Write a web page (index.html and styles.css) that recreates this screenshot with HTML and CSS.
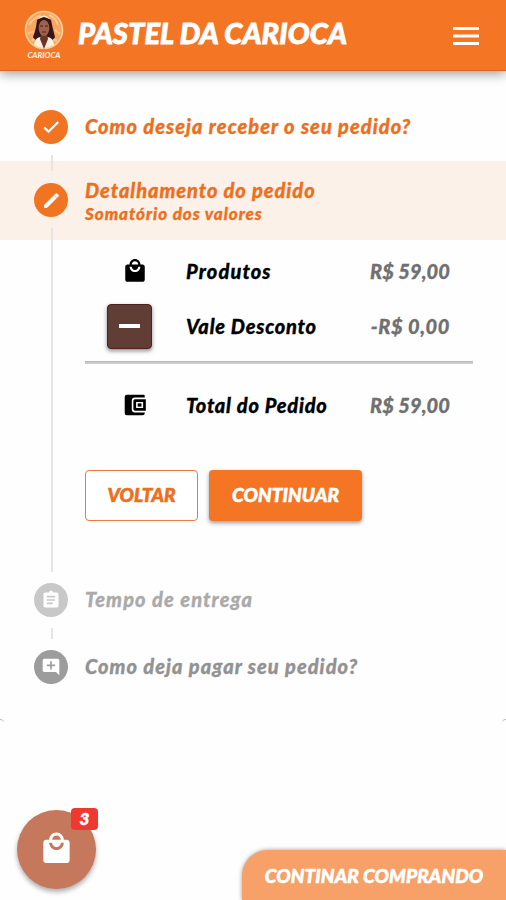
FILE: index.html
```html
<!DOCTYPE html>
<html lang="pt-BR">
<head>
<meta charset="utf-8">
<title>Pastel da Carioca</title>
<link rel="stylesheet" href="styles.css">
</head>
<body>
<header class="topbar">
  <svg class="logo" viewBox="0 0 40 50">
    <circle cx="20" cy="20" r="18.5" fill="#f9a45f" stroke="#fcd09a" stroke-width="1.6"/>
    <path d="M5 15q5-8 12-9M25 5q7 3 9 10M4 24q3-3 6-2M31 20l5 4M8 31l4-4M29 29l4 2" fill="none" stroke="#fdc78e" stroke-width="2"/>
    <path d="M13 10Q20 4 27 10Q29 20 31 27Q29 31 24 30H16Q11 31 9 27Q12 20 13 10Z" fill="#35151a"/>
    <path d="M10 35Q11 27 17 27L20 33L23 27Q29 27 30 35Q20 41 10 35Z" fill="#fff0dd"/>
    <path d="M17 24h6l1 5-4 10-4-10Z" fill="#6d3529"/>
    <ellipse cx="20" cy="18" rx="5.3" ry="8" fill="#9f604c"/>
    <path d="M14 9Q20 2 26 9L23 8Q20 6 17 8Z" fill="#fff0dd"/>
    <path d="M16 16h3M21 16h3M18 22h4" stroke="#4b211d"/>
    <text x="20" y="47.5" text-anchor="middle" textLength="33" lengthAdjust="spacingAndGlyphs" class="logo-text">CARIOCA</text>
  </svg>
  <h1 class="brand">PASTEL DA CARIOCA</h1>
  <svg class="menu" viewBox="0 0 26 18"><path d="M0 1.5h26M0 9h26M0 16.5h26" stroke="#fff" stroke-width="3"/></svg>
</header>
<main class="stepper">
  <section class="step step-done">
    <span class="dot"><svg viewBox="0 0 24 24"><path d="M9 16.17 4.83 12l-1.42 1.41L9 19 21 7l-1.41-1.41z" stroke="#fff"/></svg></span>
    <h2 class="label label-first">Como deseja receber o seu pedido?</h2>
  </section>
  <div class="line line-one"></div>
  <section class="step step-active">
    <span class="dot"><svg class="pencil" viewBox="0 0 24 24"><path d="M4 17.2V20h2.8L17.7 9.1l-2.8-2.8L4 17.2zM19.7 7.1c.4-.4.4-1 0-1.4l-1.4-1.4c-.4-.4-1-.4-1.4 0l-1.3 1.3 2.8 2.8 1.3-1.3z" stroke="#fff"/></svg></span>
    <div class="step-text">
      <h2 class="label label-detail">Detalhamento do pedido</h2>
      <p class="sublabel">Somatório dos valores</p>
    </div>
  </section>
  <section class="content">
    <div class="rows">
      <div class="row">
        <svg class="icon" viewBox="0 0 24 24"><path d="M19 6h-2c0-2.76-2.24-5-5-5S7 3.24 7 6H5c-1.1 0-1.99.9-1.99 2L3 20c0 1.1.9 2 2 2h14c1.1 0 2-.9 2-2V8c0-1.1-.9-2-2-2zm-7-3c1.66 0 3 1.34 3 3H9c0-1.66 1.34-3 3-3zm0 10c-2.76 0-5-2.24-5-5h2c0 1.66 1.34 3 3 3s3-1.34 3-3h2c0 2.76-2.24 5-5 5z"/></svg>
        <span class="name name-products">Produtos</span><span class="price">R$ 59,00</span>
      </div>
      <div class="row row-coupon">
        <button class="minus" aria-label="Remover"><span></span></button>
        <span class="name name-coupon">Vale Desconto</span><span class="price price-coupon">-R$ 0,00</span>
      </div>
      <hr>
      <div class="row row-total">
        <svg class="icon" viewBox="0 0 24 24"><path d="M4.500 2.500H20a1 1 0 0 1 1 1V5h-9a3 3 0 0 0-3 3v8a3 3 0 0 0 3 3h9v.500a2 2 0 0 1-2 2H4.500a2 2 0 0 1-2-2v-15a2 2 0 0 1 2-2z"/><path fill-rule="evenodd" d="M12 6.700h10v10.600H12a1.500 1.500 0 0 1-1.500-1.500V8.200a1.500 1.500 0 0 1 1.500-1.500zm1 2.500v5.600h6.500V9.200z"/><rect x="14.500" y="10.500" width="3.500" height="3"/></svg>
        <span class="name name-total">Total do Pedido</span><span class="price">R$ 59,00</span>
      </div>
    </div>
    <div class="actions">
      <button class="btn btn-back">VOLTAR</button>
      <button class="btn btn-next">CONTINUAR</button>
    </div>
  </section>
  <section class="step step-time">
    <span class="dot"><svg viewBox="0 0 24 24"><path d="M19 3h-4.180C14.400 1.840 13.300 1 12 1s-2.400.84-2.820 2H5c-1.100 0-2 .9-2 2v14c0 1.100.9 2 2 2h14c1.100 0 2-.9 2-2V5c0-1.100-.9-2-2-2zm-5 14H7v-2h7v2zm3-4H7v-2h10v2zm0-4H7V7h10v2z"/></svg></span>
    <h2 class="label label-time">Tempo de entrega</h2>
  </section>
  <div class="line line-two"></div>
  <section class="step step-pay">
    <span class="dot"><svg viewBox="0 0 24 24"><path d="M22 4c0-1.100-.9-2-2-2H4c-1.100 0-2 .9-2 2v12c0 1.100.9 2 2 2h14l4 4V4zm-5 7h-4v4h-2v-4H7V9h4V5h2v4h4v2z"/></svg></span>
    <h2 class="label label-pay">Como deja pagar seu pedido?</h2>
  </section>
</main>
<footer class="bottom">
  <div class="cart">
    <svg viewBox="0 0 24 24"><path d="M19 6h-2c0-2.760-2.240-5-5-5S7 3.240 7 6H5c-1.100 0-2 .9-2 2v12c0 1.100.9 2 2 2h14c1.100 0 2-.9 2-2V8c0-1.100-.9-2-2-2zm-7-3c1.660 0 3 1.340 3 3H9c0-1.660 1.340-3 3-3zm0 10c-2.760 0-5-2.240-5-5h2c0 1.660 1.340 3 3 3s3-1.340 3-3h2c0 2.760-2.240 5-5 5z"/></svg>
    <span class="badge">3</span>
  </div>
  <button class="shop">CONTINAR COMPRANDO</button>
</footer>
</body>
</html>
```

FILE: styles.css
```css
* { box-sizing: border-box; }
body { margin: 0; width: 506px; height: 900px; display: flex; flex-direction: column; overflow: hidden; background: #fefefe; font-family: Lato, "Noto Sans", sans-serif; font-weight: 900; font-style: italic; }
h1, h2, p { margin: 0; white-space: nowrap; }
button { font: inherit; padding: 0; border: 0; white-space: nowrap; }
.topbar { height: 71px; flex: none; display: flex; align-items: center; padding: 0 27px 0 24px; background: #f47625; border-bottom: 1px solid #df641b; box-shadow: 0 3px 11px rgba(0,0,0,.38); }
.logo { width: 40px; height: 50px; margin-top: -1px; }
.logo-text { font-size: 8px; fill: #fff0dd; }
.brand { margin: -5px 0 0 14px; font-size: 29px; line-height: 40px; font-weight: 900; color: #fff; letter-spacing: .12px; -webkit-text-stroke: .9px; }
.menu { width: 26px; height: 18px; margin-left: auto; margin-top: 1px; }
.stepper { position: relative; height: 652px; padding-top: 28px; flex: none; }
.stepper::before, .stepper::after { content: ""; position: absolute; bottom: -1px; width: 4px; height: 4px; border-top: 1px solid #bbb; }
.stepper::before { left: 0; border-top-right-radius: 4px; }
.stepper::after { right: 0; border-top-left-radius: 4px; }
.step { display: flex; align-items: center; padding-left: 34px; gap: 17px; color: #ed6f1c; }
.dot { width: 34px; height: 34px; flex: none; display: grid; place-items: center; border-radius: 50%; background: #f07421; }
.dot svg { width: 20px; height: 20px; fill: #fff; }
.dot .pencil { width: 21px; height: 21px; }
.label { font-size: 20px; line-height: 24px; font-weight: 900; margin-top: -2px; letter-spacing: 1.02px; -webkit-text-stroke: .3px; }
.label-detail { margin-top: 0; letter-spacing: .94px; }
.label-time { letter-spacing: 1.1px; }
.step-text { margin-top: 2px; }
.step-done { height: 56px; }
.line { width: 2px; margin-left: 51px; background: #e5e5e5; }
.line-one { height: 16px; margin-bottom: -10px; position: relative; z-index: 1; }
.step-active { height: 79px; background: #fcf1e9; }
.step-active .dot { margin-top: -1px; }
.sublabel { font-size: 17px; line-height: 23px; letter-spacing: .95px; -webkit-text-stroke: .3px; }
.content { position: relative; height: 332px; margin-left: 51px; padding: 7px 33px 0; }
.content::before { content: ""; position: absolute; left: 0; top: -12px; bottom: 0; width: 2px; background: #e5e5e5; }
.row { display: grid; grid-template-columns: 102px 1fr auto; align-items: center; height: 48px; padding-right: 23px; }
.icon { width: 26px; height: 26px; margin-left: 38px; }
.row-coupon { height: 62px; }
.name { font-size: 20px; white-space: nowrap; letter-spacing: .75px; -webkit-text-stroke: .3px; }
.name-products { letter-spacing: 1.1px; }
.price { font-size: 20px; color: #707070; white-space: nowrap; letter-spacing: .1px; -webkit-text-stroke: .3px; }
.price-coupon { letter-spacing: .6px; }
.minus { width: 45px; height: 45px; margin-left: 23px; display: grid; place-items: center; background: #603e35; border: 1px solid #50221d; border-radius: 4px; box-shadow: 0 2px 4px rgba(0,0,0,.45); }
.minus span { width: 21px; height: 4px; background: #fff; }
hr { margin: 4px 0 0 1px; border: 0; height: 3px; background: #cbcbcb; border-top: 1px solid #b8b8b8; }
.row-total { margin-top: 18px; height: 46px; }
.actions { display: flex; gap: 11px; margin: 42px 0 0 1px; }
.btn { height: 51px; padding-bottom: 2px; border-radius: 4px; font-size: 19px; letter-spacing: .1px; -webkit-text-stroke: .6px; }
.btn-back { width: 113px; color: #ed6f1c; background: #fff; border: 1px solid #ee7941; }
.btn-next { width: 153px; color: #fff; background: #f47625; box-shadow: 0 2px 4px rgba(0,0,0,.4); }
.step-time { height: 56px; color: #aaa; }
.step-time .dot { background: #c8c8c8; }
.line-two { height: 11px; }
.step-pay { height: 56px; color: #929292; }
.step-pay .dot { background: #9c9c9c; }
.bottom { flex: 1; display: flex; align-items: flex-end; justify-content: space-between; padding-left: 17px; }
.cart { position: relative; width: 79px; height: 79px; margin-bottom: 11px; border-radius: 50%; display: grid; place-items: center; background: #c6785c; box-shadow: 0 3px 5px rgba(0,0,0,.32); }
.cart svg { width: 35px; height: 35px; fill: #fff; margin-top: -2px; }
.badge { position: absolute; left: 54px; top: -2px; width: 27px; height: 22px; border-radius: 4px; background: #ee3830; color: #fff; text-align: center; font-size: 17px; line-height: 22px; -webkit-text-stroke: .6px; }
.shop { width: 264px; height: 50px; border-radius: 26px 0 0 0; background: #f7a067; color: #fff; font-size: 19px; letter-spacing: .1px; -webkit-text-stroke: .6px; box-shadow: 0 0 4px rgba(0,0,0,.4); }
```
